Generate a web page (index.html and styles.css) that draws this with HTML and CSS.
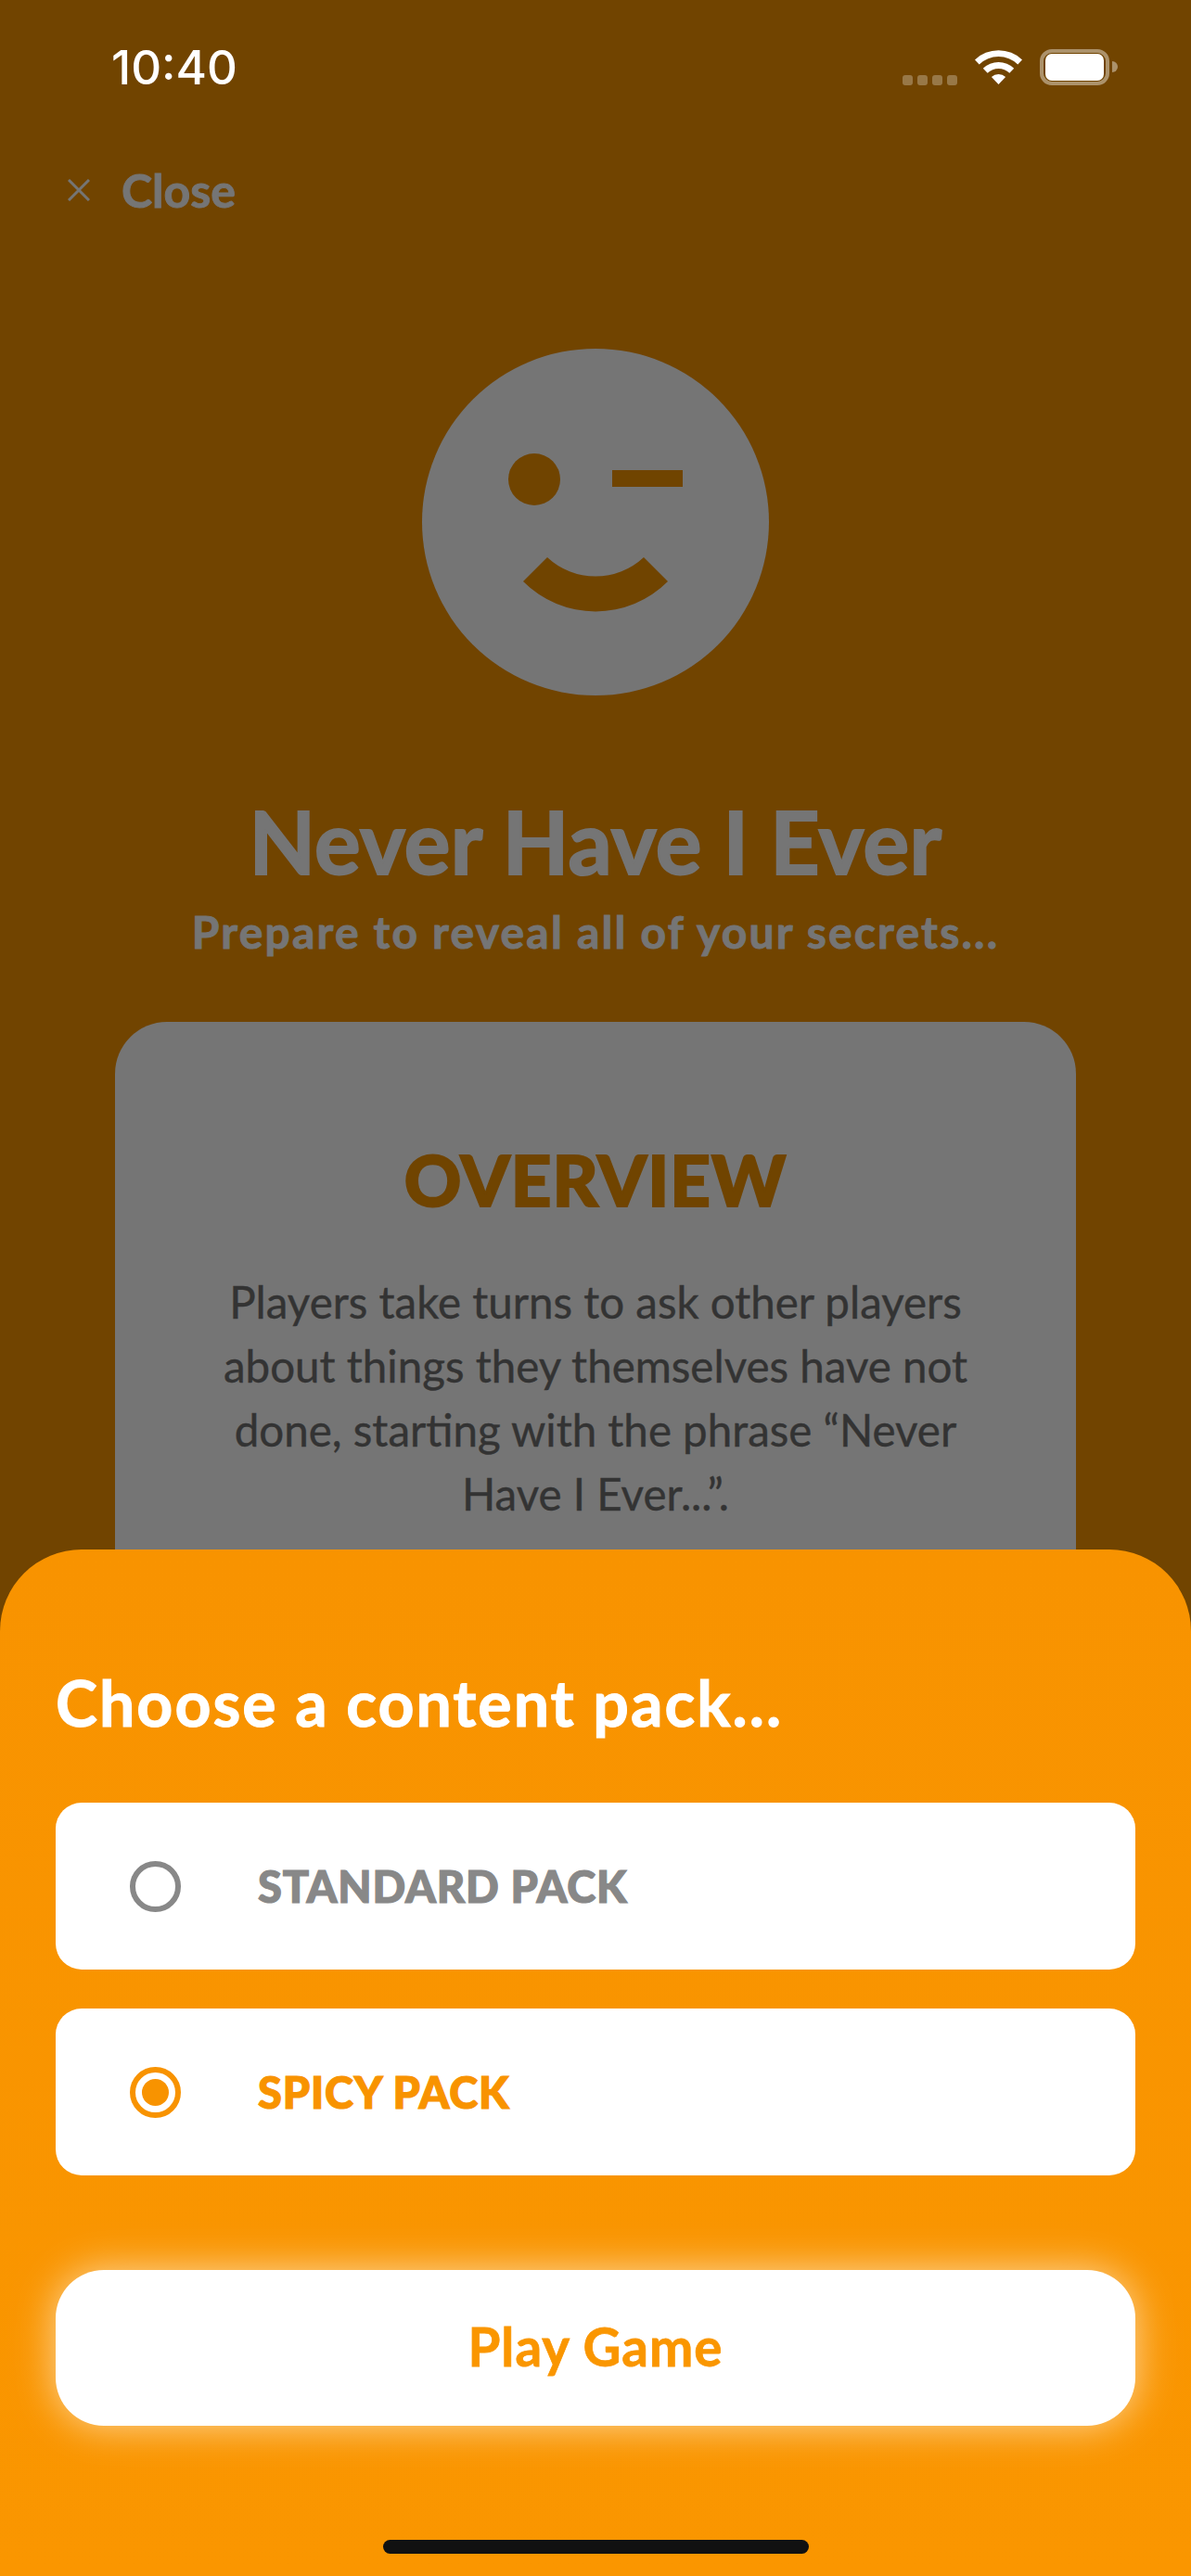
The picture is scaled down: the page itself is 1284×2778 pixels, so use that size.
FILE: index.html
```html
<!DOCTYPE html>
<html lang="en">
<head>
<meta charset="utf-8">
<title>Never Have I Ever</title>
<link rel="stylesheet" href="styles.css">
</head>
<body>
<div class="screen">
  <div class="status">
    <span class="time">10:40</span>
    <div class="status-icons">
      <div class="signal"><i></i><i></i><i></i><i></i></div>
      <svg class="wifi" viewBox="0 0 51 37" width="51" height="37">
        <path fill="#fff" d="M0 10.4A37 37 0 0 1 51 10.4L46.3 15.4A30 30 0 0 0 4.7 15.4Z"/>
        <path fill="#fff" d="M8.8 19.7A24 24 0 0 1 42.2 19.7L37.3 24.8A17 17 0 0 0 13.7 24.8Z"/>
        <path fill="#fff" d="M17.9 29.1A11 11 0 0 1 33.1 29.1L25.5 37Z"/>
      </svg>
      <div class="battery"><div class="battery-level"></div></div>
      <div class="battery-nub"></div>
    </div>
  </div>

  <div class="close">
    <svg class="close-x" viewBox="0 0 24 24" width="24" height="24">
      <path d="M1 1L23 23M23 1L1 23" stroke="#757575" stroke-width="3" fill="none"/>
    </svg>
    <span class="close-label">Close</span>
  </div>

  <svg class="face" viewBox="0 0 374 374" width="374" height="374">
    <circle cx="187" cy="187" r="187" fill="#757575"/>
    <circle cx="121" cy="141" r="28" fill="#704400"/>
    <rect x="205" y="131" width="76" height="18" fill="#704400"/>
    <path fill="#704400" d="M109 251A110 110 0 0 0 265 251L239 225A76 76 0 0 1 135 225Z"/>
  </svg>

  <h1 class="title">Never Have I Ever</h1>
  <p class="subtitle">Prepare to reveal all of your secrets...</p>

  <section class="card">
    <h2 class="card-title">OVERVIEW</h2>
    <p class="card-text">Players take turns to ask other players<br>about things they themselves have not<br>done, starting with the phrase “Never<br>Have I Ever...”.</p>
  </section>

  <div class="sheet">
    <h3 class="sheet-title">Choose a content pack...</h3>
    <div class="options">
      <div class="option">
        <span class="radio"></span>
        <span class="option-label">STANDARD PACK</span>
      </div>
      <div class="option option-active">
        <span class="radio"><span class="radio-dot"></span></span>
        <span class="option-label">SPICY PACK</span>
      </div>
    </div>
    <button class="play">Play Game</button>
    <div class="home-bar"></div>
  </div>
</div>
</body>
</html>
```

FILE: styles.css
```css
* { box-sizing: border-box; }
html, body { margin: 0; padding: 0; }
body { width: 1284px; height: 2778px; overflow: hidden; background: #714400; font-family: "Lato", "Open Sans", sans-serif; }
.screen { position: relative; width: 1284px; height: 2778px; display: flex; flex-direction: column; align-items: center; overflow: hidden; }

.status { width: 100%; height: 144px; padding: 53px 80px 0 120px; display: flex; justify-content: space-between; align-items: flex-start; flex: none; }
.time { font-family: "Inter", sans-serif; font-size: 51px; font-weight: 500; line-height: 40px; color: #fff; }
.status-icons { display: flex; align-items: flex-start; width: 231px; flex: none; }
.signal { display: flex; gap: 5px; margin-top: 28px; }
.signal i { display: block; width: 11px; height: 11px; border-radius: 3px; background: rgba(255,255,255,.28); }
.wifi { margin-left: 19px; margin-top: 1px; flex: none; }
.battery { margin-left: 19px; width: 75px; height: 39px; border: 4px solid rgba(255,255,255,.42); border-radius: 13px; padding: 1px 2px; flex: none; }
.battery-level { width: 100%; height: 100%; background: #fff; border-radius: 7px; }
.battery-nub { width: 6px; height: 12px; margin: 13px 0 0 3px; background: rgba(255,255,255,.42); border-radius: 0 6px 6px 0; flex: none; }

.close { align-self: flex-start; margin-left: 73px; height: 40px; display: flex; align-items: center; gap: 34px; flex: none; margin-top: 41px; }
.close-label { font-size: 50px; font-weight: 700; color: #757575; line-height: 40px; -webkit-text-stroke: 1px #757575; }
.close-x { flex: none; }

.face { margin-top: 151px; flex: none; display: block; }

.title { margin: 107px 0 0; font-size: 93px; line-height: 100px; font-weight: 700; color: #757575; text-align: center; letter-spacing: 0.3px; flex: none; -webkit-text-stroke: 2px #757575; }
.subtitle { margin: 20px 0 0; font-size: 48px; line-height: 56px; font-weight: 700; color: #757575; text-align: center; letter-spacing: 2.2px; flex: none; -webkit-text-stroke: 1px #757575; }

.card { margin-top: 69px; width: 1036px; height: 800px; background: #757575; border-radius: 56px; padding-top: 128px; text-align: center; flex: none; }
.card-title { margin: 0; font-size: 76px; line-height: 84px; font-weight: 900; color: #704400; letter-spacing: 1px; -webkit-text-stroke: 2px #704400; }
.card-text { margin: 55px 0 0; font-size: 47.5px; line-height: 69px; font-weight: 400; color: #333; -webkit-text-stroke: 0.4px #333; }

.sheet { position: absolute; left: 0; right: 0; top: 1671px; bottom: 0; background: linear-gradient(#f89300, #fa9600); border-radius: 88px 88px 0 0; padding: 127px 60px 0; display: flex; flex-direction: column; }
.sheet-title { margin: 0; font-size: 68px; line-height: 76px; font-weight: 700; color: #fff; letter-spacing: 2px; -webkit-text-stroke: 1px #fff; }
.options { margin-top: 70px; display: flex; flex-direction: column; gap: 42px; }
.option { height: 180px; background: #fff; border-radius: 28px; display: flex; align-items: center; padding-left: 80px; gap: 83px; color: #888; }
.option-active { color: #f89300; }
.radio { width: 55px; height: 55px; border: 6px solid currentColor; border-radius: 50%; display: flex; align-items: center; justify-content: center; flex: none; }
.radio-dot { width: 29px; height: 29px; border-radius: 50%; background: currentColor; }
.option-label { font-size: 47px; line-height: 56px; font-weight: 900; letter-spacing: 0.8px; -webkit-text-stroke: 1.2px currentColor; }

.play { margin-top: 102px; height: 168px; width: 100%; border: 0; padding: 0 0 4px; background: #fff; border-radius: 52px; box-shadow: 0 0 44px rgba(255,255,255,.62); font-family: inherit; font-size: 56.5px; font-weight: 700; color: #fa9600; letter-spacing: 1px; -webkit-text-stroke: 0.8px #fa9600; }
.home-bar { align-self: center; margin-top: 123px; width: 459px; height: 15px; border-radius: 8px; background: #111; flex: none; }
```
